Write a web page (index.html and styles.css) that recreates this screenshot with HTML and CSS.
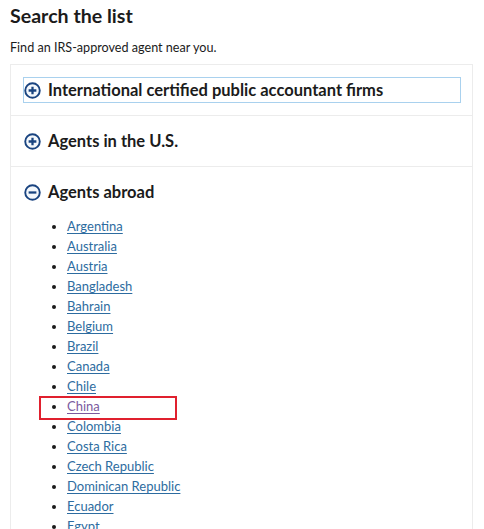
FILE: index.html
```html
<!DOCTYPE html>
<html lang="en">
<head>
<meta charset="utf-8">
<title>Search the list</title>
<link rel="stylesheet" href="styles.css">
</head>
<body>
<main class="page">
  <h2 class="title">Search the list</h2>
  <p class="intro">Find an IRS-approved agent near you.</p>
  <div class="accordion">
    <div class="item">
      <button class="head focused">
        <svg class="icon" viewBox="0 0 18 18" width="17" height="17"><circle cx="9" cy="9" r="7.7" fill="#f4f8fc" stroke="#1a4480" stroke-width="2"/><path d="M4.9 9h8.2M9 4.9v8.2" stroke="#1a4480" stroke-width="2.4"/></svg>
        <span>International certified public accountant firms</span>
      </button>
    </div>
    <div class="item">
      <button class="head">
        <svg class="icon" viewBox="0 0 18 18" width="17" height="17"><circle cx="9" cy="9" r="7.7" fill="#f4f8fc" stroke="#1a4480" stroke-width="2"/><path d="M4.9 9h8.2M9 4.9v8.2" stroke="#1a4480" stroke-width="2.4"/></svg>
        <span>Agents in the U.S.</span>
      </button>
    </div>
    <div class="item open">
      <button class="head">
        <svg class="icon" viewBox="0 0 18 18" width="17" height="17"><circle cx="9" cy="9" r="7.7" fill="#f4f8fc" stroke="#1a4480" stroke-width="2"/><path d="M4.9 9h8.2" stroke="#1a4480" stroke-width="2.4"/></svg>
        <span>Agents abroad</span>
      </button>
      <ul class="countries">
        <li><a href="#">Argentina</a></li>
        <li><a href="#">Australia</a></li>
        <li><a href="#">Austria</a></li>
        <li><a href="#">Bangladesh</a></li>
        <li><a href="#">Bahrain</a></li>
        <li><a href="#">Belgium</a></li>
        <li><a href="#">Brazil</a></li>
        <li><a href="#">Canada</a></li>
        <li><a href="#">Chile</a></li>
        <li class="marked"><a class="visited" href="#">China</a></li>
        <li><a href="#">Colombia</a></li>
        <li><a href="#">Costa Rica</a></li>
        <li><a href="#">Czech Republic</a></li>
        <li><a href="#">Dominican Republic</a></li>
        <li><a href="#">Ecuador</a></li>
        <li><a href="#">Egypt</a></li>
      </ul>
    </div>
  </div>
</main>
</body>
</html>
```

FILE: styles.css
```css
html, body {
  margin: 0;
  padding: 0;
  background: #ffffff;
}

body {
  font-family: Lato, "Noto Sans", sans-serif;
  color: #1b1b1b;
  overflow: hidden;
}

.page {
  padding: 5px 0 0 10px;
  width: 463px;
}

.title {
  margin: 0;
  font-size: 19.6px;
  line-height: 22px;
  font-weight: 700;
  color: #1b1b1b;
}

.intro {
  margin: 13px 0 0 0;
  font-size: 12.6px;
  line-height: 16px;
  color: #1b1b1b;
}

.accordion {
  margin-top: 8px;
  border: 1px solid #ececec;
  border-bottom: none;
}

.item {
  border-bottom: 1px solid #ececec;
  padding: 12px 11px 12px 12px;
}

.head {
  display: flex;
  align-items: center;
  gap: 7px;
  width: 100%;
  height: 26px;
  margin: 0;
  padding: 0;
  border: 1px solid transparent;
  background: none;
  font-family: inherit;
  font-size: 16.5px;
  font-weight: 700;
  color: #1b1b1b;
  text-align: left;
  cursor: pointer;
}

.head.focused {
  border-color: #a9d1ee;
}

.icon {
  flex: none;
  display: block;
}

.countries {
  margin: 11px 0 0 0;
  padding: 0 0 0 44px;
  list-style: disc;
  font-size: 13px;
  line-height: 20px;
}

.countries a {
  color: #2d6ca0;
  text-decoration: underline;
  text-underline-offset: 2px;
}

.countries a.visited {
  color: #7a5a9e;
}

.marked {
  position: relative;
}

.marked::after {
  content: "";
  position: absolute;
  left: -28px;
  top: 0;
  width: 134px;
  height: 20px;
  border: 2px solid #e0202e;
  pointer-events: none;
}
```
